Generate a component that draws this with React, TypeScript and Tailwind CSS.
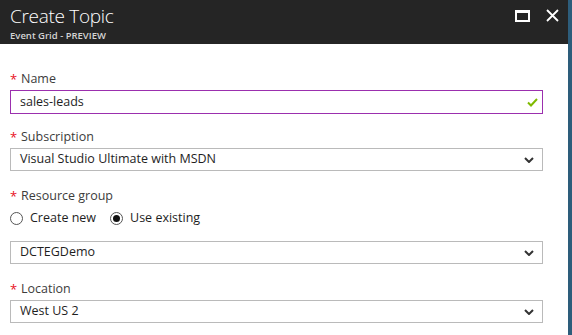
import React from "react";

function Chevron() {
  return (
    <svg width="10" height="6" viewBox="0 0 10 6" className="shrink-0">
      <path d="M1 1l4 4 4-4" fill="none" stroke="#333" strokeWidth="2" />
    </svg>
  );
}

function Label({ text }: { text: string }) {
  return (
    <div className="flex items-center h-4 text-[12.5px] leading-4 text-[#3c3c3c]">
      <span className="text-[#e81123] w-[11px] text-[13px] leading-4">*</span>
      <span>{text}</span>
    </div>
  );
}

function Select({ value }: { value: string }) {
  return (
    <div className="flex items-center justify-between h-[23px] border border-[#bababa] pl-[9px] pr-[8px] text-[12.5px] text-[#1e1e1e]">
      <span>{value}</span>
      <Chevron />
    </div>
  );
}

function Radio({ checked, label }: { checked?: boolean; label: string }) {
  return (
    <div className="flex items-center gap-[7px]">
      <span className="flex items-center justify-center w-[13px] h-[13px] rounded-full border border-[#555] bg-white">
        {checked && <span className="w-[7px] h-[7px] rounded-full bg-[#111]" />}
      </span>
      <span>{label}</span>
    </div>
  );
}

export default function App() {
  return (
    <div className="flex w-[572px] h-[335px] bg-white overflow-hidden font-['Open_Sans',sans-serif]">
      <div className="flex flex-col flex-1">
        {/* Blade header */}
        <div className="flex items-start justify-between h-[44px] bg-[#252525] pl-[10px] pr-[9px]">
          <div className="flex flex-col">
            <span className="text-[19px] leading-[22px] mt-[5px] font-light tracking-[-0.3px] text-white">Create Topic</span>
            <span className="text-[9.5px] leading-[11px] mt-[3px] font-semibold text-[#d4d4d4]">Event Grid - PREVIEW</span>
          </div>
          <div className="flex items-center gap-[16px] mt-[9px]">
            <svg width="15" height="12" viewBox="0 0 15 12">
              <rect x="1" y="1.5" width="13" height="9.5" fill="none" stroke="#fff" strokeWidth="2" />
              <rect x="0" y="0" width="15" height="3" fill="#fff" />
            </svg>
            <svg width="13" height="13" viewBox="0 0 13 13">
              <path d="M1 1l11 11M12 1L1 12" stroke="#fff" strokeWidth="1.8" />
            </svg>
          </div>
        </div>

        {/* Form */}
        <div className="flex flex-col pl-[10px] pr-[25px] pt-[27px]">
          <Label text="Name" />
          <div className="flex items-center justify-between h-[24px] mt-[3px] border border-[#9b2fae] pl-[9px] pr-[4px] text-[12.5px] text-[#1e1e1e]">
            <span>sales-leads</span>
            <svg width="11" height="9" viewBox="0 0 11 9">
              <path d="M1 4.5l3 3L10 1" fill="none" stroke="#7fba00" strokeWidth="2" />
            </svg>
          </div>

          <div className="mt-[15px]">
            <Label text="Subscription" />
          </div>
          <div className="mt-[3px]">
            <Select value="Visual Studio Ultimate with MSDN" />
          </div>

          <div className="mt-[17px]">
            <Label text="Resource group" />
          </div>
          <div className="flex items-center gap-[14px] h-4 mt-[6px] text-[12.5px] text-[#1e1e1e]">
            <Radio label="Create new" />
            <Radio checked label="Use existing" />
          </div>
          <div className="mt-[15px]">
            <Select value="DCTEGDemo" />
          </div>

          <div className="mt-[17px]">
            <Label text="Location" />
          </div>
          <div className="mt-[3px]">
            <Select value="West US 2" />
          </div>
        </div>
      </div>
      <div className="w-[4px] bg-[#2d5d7b]" />
    </div>
  );
}
